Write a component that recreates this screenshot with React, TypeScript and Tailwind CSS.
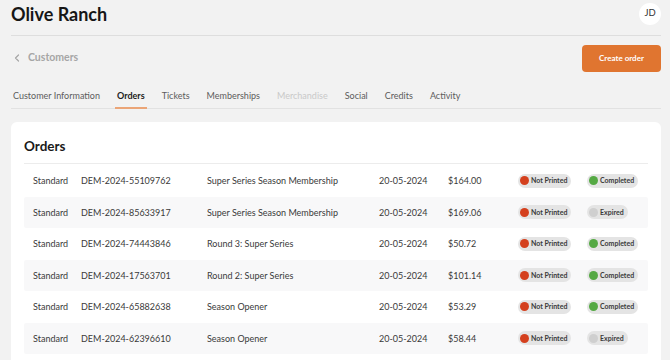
import React from 'react';

type Order = {
  type: string;
  id: string;
  name: string;
  date: string;
  price: string;
  status: 'Completed' | 'Expired';
};

const orders: Order[] = [
  { type: 'Standard', id: 'DEM-2024-55109762', name: 'Super Series Season Membership', date: '20-05-2024', price: '$164.00', status: 'Completed' },
  { type: 'Standard', id: 'DEM-2024-85633917', name: 'Super Series Season Membership', date: '20-05-2024', price: '$169.06', status: 'Expired' },
  { type: 'Standard', id: 'DEM-2024-74443846', name: 'Round 3: Super Series', date: '20-05-2024', price: '$50.72', status: 'Completed' },
  { type: 'Standard', id: 'DEM-2024-17563701', name: 'Round 2: Super Series', date: '20-05-2024', price: '$101.14', status: 'Completed' },
  { type: 'Standard', id: 'DEM-2024-65882638', name: 'Season Opener', date: '20-05-2024', price: '$53.29', status: 'Completed' },
  { type: 'Standard', id: 'DEM-2024-62396610', name: 'Season Opener', date: '20-05-2024', price: '$58.44', status: 'Expired' },
];

const tabs = ['Customer Information', 'Orders', 'Tickets', 'Memberships', 'Merchandise', 'Social', 'Credits', 'Activity'];

function Pill({ label, dot }: { label: string; dot: string }) {
  return (
    <span className="inline-flex items-center h-[14px] rounded-full bg-[#e4e4e4] pl-[2px] pr-[4px] gap-[2px]">
      <span className={`w-[9px] h-[9px] rounded-full ${dot}`} />
      <span className="text-[7px] font-bold text-[#3a3a3a] leading-none">{label}</span>
    </span>
  );
}

export default function App() {
  return (
    <div className="w-[670px] h-[360px] overflow-hidden bg-[#f2f2f2] font-['Lato',sans-serif]">
      {/* header */}
      <div className="ml-[11px] w-[650px] h-[36px] flex items-center justify-between border-b border-[#dedede]">
        <h1 className="text-[18px] font-bold text-[#161616] leading-none -mt-[7px]">Olive Ranch</h1>
        <div className="w-[22px] h-[22px] rounded-full bg-white flex items-center justify-center text-[9.5px] text-[#333] -mt-[8px]">
          JD
        </div>
      </div>

      {/* breadcrumb + action */}
      <div className="ml-[11px] w-[650px] h-[44px] flex items-center justify-between">
        <div className="flex items-center gap-[8px] pl-[3px] text-[#a6a6a6]">
          <svg width="6" height="8" viewBox="0 0 6 8" fill="none">
            <path d="M4.5 1L1.5 4L4.5 7" stroke="currentColor" strokeWidth="1.2" strokeLinecap="round" strokeLinejoin="round" />
          </svg>
          <span className="text-[10.5px] font-bold">Customers</span>
        </div>
        <button className="w-[79px] h-[27px] rounded-[4px] bg-[#e07530] text-white text-[8px] font-bold">
          Create order
        </button>
      </div>

      {/* tabs */}
      <div className="ml-[11px] w-[650px] h-[29px] flex items-stretch border-b border-[#e2e2e2] gap-[13px]">
        {tabs.map((t) => (
          <div
            key={t}
            className={`px-[2px] pt-[4px] flex items-center text-[9px] -mb-px border-b-2 ${
              t === 'Orders'
                ? 'border-[#eba577] text-[#1c1c1c] font-bold'
                : t === 'Merchandise'
                  ? 'border-transparent text-[#c9c9c9]'
                  : 'border-transparent text-[#5c5c5c]'
            }`}
          >
            {t}
          </div>
        ))}
      </div>

      {/* card */}
      <div className="ml-[11px] mt-[13px] w-[650px] h-[260px] bg-white rounded-[6px] px-[13px]">
        <div className="h-[42px] flex items-end pb-[10px] border-b border-[#ececec]">
          <h2 className="text-[13.5px] font-bold text-[#1a1a1a] leading-none">Orders</h2>
        </div>
        <div className="flex flex-col pt-px">
          {orders.map((o, i) => (
            <div
              key={o.id}
              className={`h-[31.5px] flex items-center text-[9px] text-[#3a3a3a] rounded-[2px] ${i % 2 === 1 ? 'bg-[#f8f8f9]' : ''}`}
            >
              <span className="pl-[9px] w-[57px]">{o.type}</span>
              <span className="w-[126px]">{o.id}</span>
              <span className="w-[172px]">{o.name}</span>
              <span className="w-[69px]">{o.date}</span>
              <span className="w-[70px]">{o.price}</span>
              <span className="w-[69px] flex">
                <Pill label="Not Printed" dot="bg-[#d4401e]" />
              </span>
              <span className="flex">
                {o.status === 'Completed' ? (
                  <Pill label="Completed" dot="bg-[#55a944]" />
                ) : (
                  <Pill label="Expired" dot="bg-[#cfcfcf]" />
                )}
              </span>
            </div>
          ))}
        </div>
      </div>
    </div>
  );
}
